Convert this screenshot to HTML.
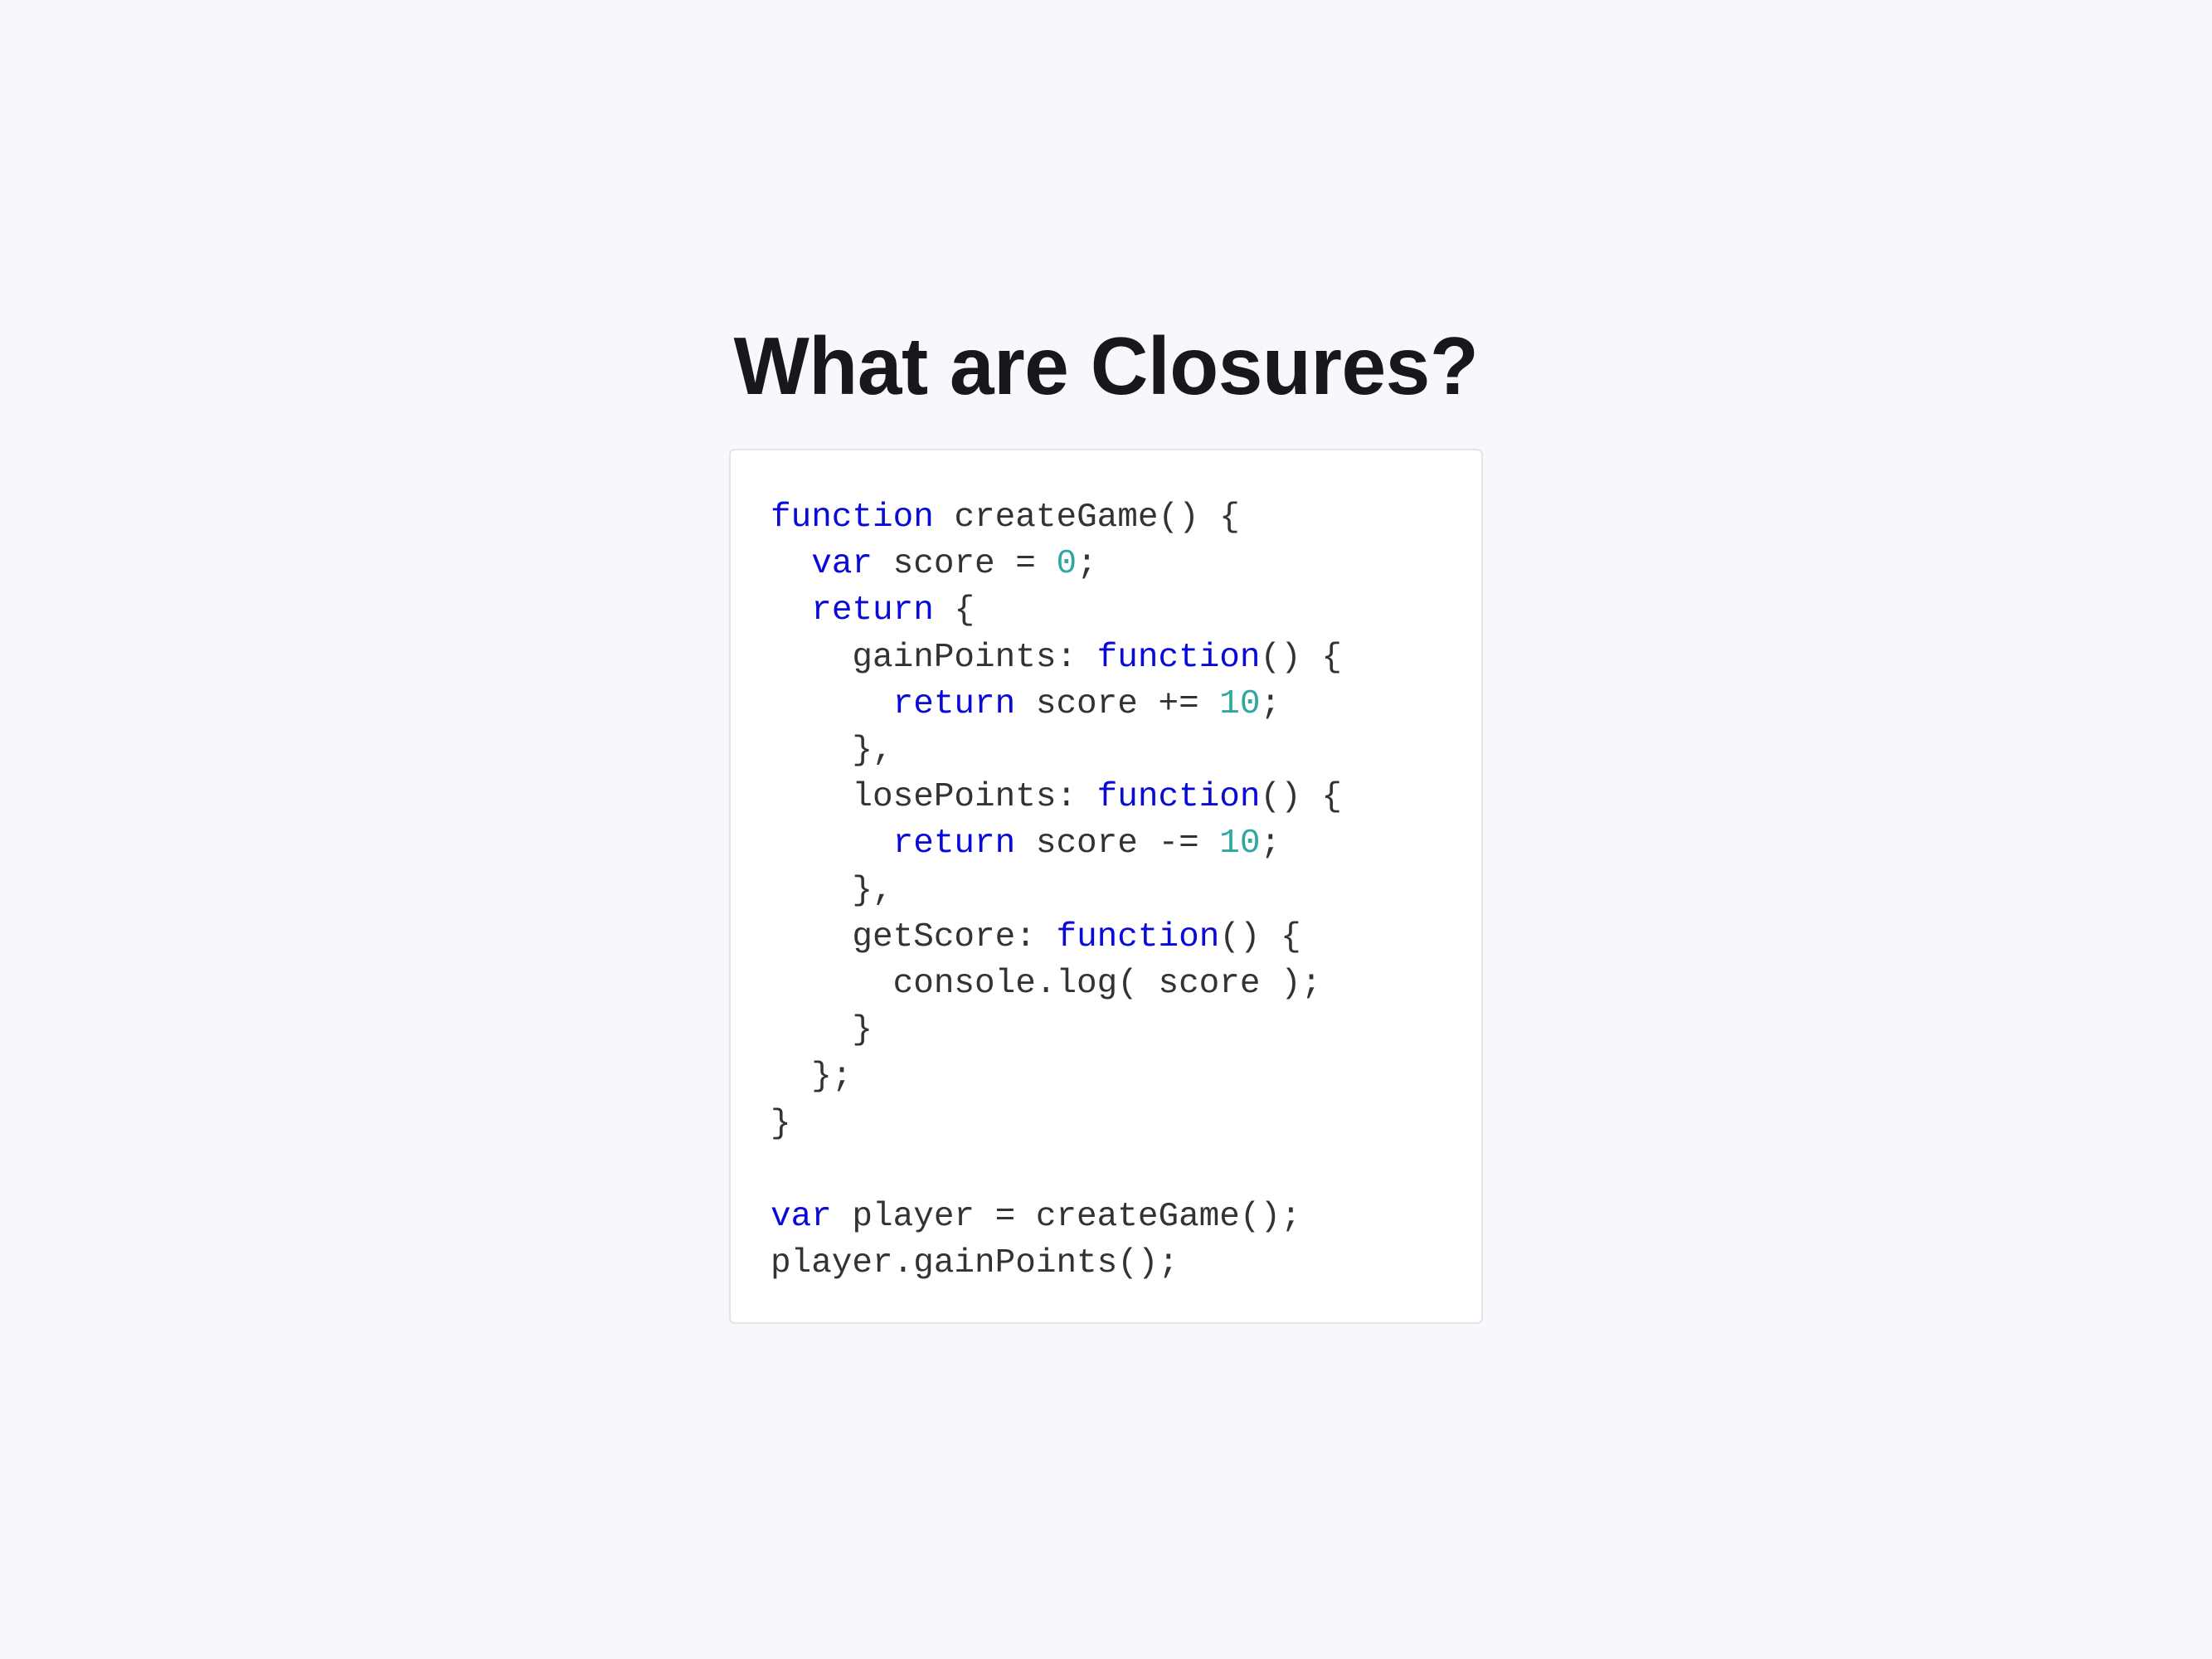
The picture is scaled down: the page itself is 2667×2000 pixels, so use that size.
<!DOCTYPE html>
<html><head><meta charset="utf-8"><style>
html,body{margin:0;padding:0;}
body{width:2667px;height:2000px;background:#f7f8fc;position:relative;overflow:hidden;}
h1{position:absolute;left:0;width:2667px;top:392px;margin:0;text-align:center;font:bold 98px/1 "Liberation Sans",sans-serif;letter-spacing:-0.5px;color:#17181d;transform:scaleX(0.985);transform-origin:1333px 0;}
.box{position:absolute;left:879px;top:541px;width:909px;height:1055px;background:#fff;border:2px solid #e3e4e8;border-radius:7px;box-sizing:border-box;}
pre{position:absolute;left:929px;top:596px;margin:0;font:41px/56.2px "Liberation Mono",monospace;color:#333;}
.k{color:#0a0ad8}.n{color:#2fa8a0}
</style></head><body>
<h1>What are Closures?</h1>
<div class="box"></div>
<pre><span class="k">function</span> createGame() {
  <span class="k">var</span> score = <span class="n">0</span>;
  <span class="k">return</span> {
    gainPoints: <span class="k">function</span>() {
      <span class="k">return</span> score += <span class="n">10</span>;
    },
    losePoints: <span class="k">function</span>() {
      <span class="k">return</span> score -= <span class="n">10</span>;
    },
    getScore: <span class="k">function</span>() {
      console.log( score );
    }
  };
}

<span class="k">var</span> player = createGame();
player.gainPoints();</pre>
</body></html>
